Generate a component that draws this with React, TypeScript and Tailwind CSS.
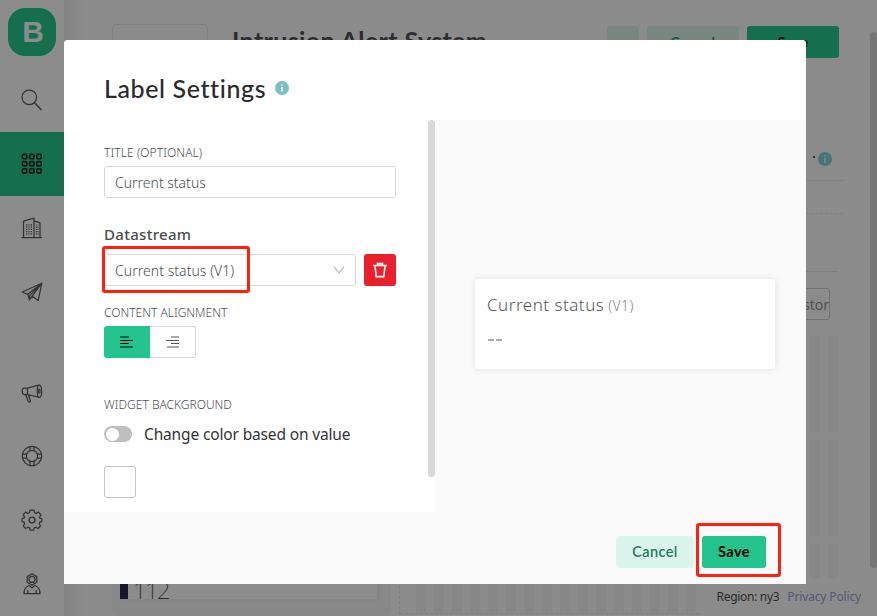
import type { ReactNode } from "react";

const body = "font-['Noto_Sans','Open_Sans',sans-serif]";
const heading = "font-[Lato,'Open_Sans',sans-serif]";

function Icon({ children, size = 22 }: { children: ReactNode; size?: number }) {
  return (
    <svg width={size} height={size} viewBox="0 0 22 22" fill="none" stroke="#333436" strokeWidth="1.25" strokeLinejoin="round" strokeLinecap="round">
      {children}
    </svg>
  );
}

function NavItem({ children, active = false }: { children: ReactNode; active?: boolean }) {
  return (
    <div className={active ? "flex h-16 w-16 items-center justify-center bg-[#156f4f]" : "flex h-16 w-16 items-center justify-center"}>
      {children}
    </div>
  );
}

function Sidebar() {
  const cells = [1.8, 9, 16.2];
  return (
    <nav className="flex h-full w-16 shrink-0 flex-col bg-[#8c8c8c]">
      <div className="flex h-[68px] shrink-0 justify-center pt-2">
        <div className="flex h-12 w-12 items-center justify-center rounded-[17px] bg-[#156f4f] pl-[2px] font-['Liberation_Sans',Arial,sans-serif] text-[30px] font-bold leading-none text-[#8c8c8c]">
          B
        </div>
      </div>
      <NavItem>
        <Icon><circle cx="8.3" cy="8.3" r="7.3" /><path d="M13.6 13.8 20 20.6" strokeWidth="1.5" /></Icon>
      </NavItem>
      <NavItem active>
        <Icon>
          {cells.map((y) => cells.map((x) => <rect key={`${x}-${y}`} x={x - 0.4} y={y - 0.4} width="4.3" height="4.3" rx="1" stroke="#07150f" strokeWidth="1.6" />))}
        </Icon>
      </NavItem>
      <NavItem>
        <Icon>
          <path d="M1 20.5h19.5M2.5 20V4.2L13 1.2V20M13 3.8l6 2V20" />
          <path d="M5 8h6M5 10.2h6M5 12.4h6M5 14.6h6M5 16.8h6" strokeDasharray="1.2 1.2" strokeLinecap="butt" strokeWidth="1.3" />
          <path d="M15 8h2.4M15 10.2h2.4M15 12.4h2.4M15 14.6h2.4M15 16.8h2.4" strokeDasharray="1 .6" strokeLinecap="butt" strokeWidth="1.2" />
        </Icon>
      </NavItem>
      <NavItem>
        <Icon><path d="M1.2 11 20.8 2.2 17.2 19.5 11.2 15.2 8.5 19 6.8 13.3ZM6.8 13.3 20.8 2.2 8.7 14.6 8.5 19M20.8 2.2 11.2 15.2" /></Icon>
      </NavItem>
      <div className="h-9 shrink-0" />
      <NavItem>
        <Icon>
          <path d="M6.5 7.2H3.2Q1.2 7.2 1.2 10.3t2 3.2h3.3ZM6.5 7.2 17.5 4.2M6.5 13.5l11 2.7M4.8 13.8 7 20q.3 1 1.4 1t1-.9L7.6 14" />
          <ellipse cx="18.4" cy="10.2" rx="2.2" ry="6.2" /><ellipse cx="18.2" cy="10.2" rx=".8" ry="2" />
        </Icon>
      </NavItem>
      <NavItem>
        <Icon><circle cx="11" cy="11" r="9.7" /><circle cx="11" cy="11" r="5.7" /><path d="M9 1.5v4.2M13 1.5v4.2M9 16.3v4.2M13 16.3v4.2M1.5 9h4.2M1.5 13h4.2M16.3 9h4.2M16.3 13h4.2" /></Icon>
      </NavItem>
      <NavItem>
        <Icon>
          <path d="m9 1.2h4l.6 2.6 1.6.7 2.3-1.4 2.5 2.7-1.5 2.3.6 1.2 1.8.3v3l-2.1.6-.6 1.6 1.3 2.2-2.4 2.5-2.3-1.3-1.5.7-.6 2.1H9.2l-.6-2.1-1.5-.7-2.4 1.3-2.4-2.5 1.3-2.2L3 13.2l-2-.6v-3l2-.5.5-1.2L2.1 5.7l2.5-2.6 2.2 1.4 1.6-.7Z" />
          <circle cx="11" cy="11" r="2.9" strokeWidth="1.4" />
        </Icon>
      </NavItem>
      <NavItem>
        <Icon><path d="m11 .8 4.8 2.8v5.6L11 12 6.2 9.2V3.6Z" /><circle cx="11" cy="6.4" r="3" /><path d="M8.3 12.5Q3 14 3 20.7h16q0-6.7-5.3-8.2L11 14.7ZM6.8 17.7v3M15.2 17.7v3" /></Icon>
      </NavItem>
    </nav>
  );
}

function Info({ dim = false }: { dim?: boolean }) {
  return (
    <svg width="14" height="14" viewBox="0 0 14 14" className="shrink-0">
      <circle cx="7" cy="7" r="7" fill={dim ? "#477577" : "#7abfc2"} />
      <path d="M6.3 3.2h1.4v1.3H6.3zM6.3 5.7h1.4v5H6.3z" fill={dim ? "#8c8c8c" : "#fff"} />
    </svg>
  );
}

const stripes = "shrink-0 bg-[repeating-linear-gradient(to_right,#878787_0_10px,transparent_10px_18px)]";

function Page() {
  return (
    <main className="flex h-full min-w-0 flex-1 bg-[linear-gradient(to_right,#838383,#8b8b8b_20px)]">
      <div className="flex w-[779px] shrink-0 flex-col pl-12">
        <header className="flex h-[120px] shrink-0 items-start pt-6">
          <div className="h-24 w-24 shrink-0 rounded-[4px] border border-[#818181]" />
          <h1 className={`${heading} ml-6 w-[375px] whitespace-nowrap pt-[1px] text-[25px] font-bold leading-[30px] tracking-[0.37px] text-[#2c2c31]`}>Intrusion Alert System</h1>
          <div className={`${heading} flex gap-2 pt-[2px] text-[14px] font-bold leading-8 tracking-[0.5px]`}>
            <div className="h-8 w-8 rounded-[3px] bg-[#788780]" />
            <div className="h-8 w-[92px] rounded-[3px] bg-[#788780] text-center text-[#1c4e3d]">Cancel</div>
            <div className="h-8 w-[92px] rounded-[3px] bg-[#156f4f] text-center text-black">Save</div>
          </div>
        </header>
        <section className="flex h-[216px] shrink-0 flex-col items-end">
          <div className="flex h-[61px] w-full items-end justify-end border-b border-[#808080] pb-[14px] pr-[11px]">
            <span className="mb-2 mr-[3px] h-[2px] w-[2px] bg-[#333]" />
            <Info dim />
          </div>
          <div className="h-[33px] w-full border-b border-dashed border-[#828282]" />
          <div className="mr-[5px] h-[58px] w-full border-b border-[#808080]" />
          <div className={`${body} mr-[13px] mt-4 flex h-8 w-20 items-center justify-end rounded-[3px] border border-[#717171] text-[14px] text-[#505153]`}>Custor</div>
        </section>
        <section className="flex flex-1">
          <div className="flex w-[279px] flex-col rounded-b-[6px] bg-[#888] px-2">
            <div className="mt-[220px] flex h-[43px] w-[257px] items-end bg-[#8c8c8c] shadow-[2px_0_4px_rgba(0,0,0,0.05)]">
              <span className="h-full w-2 bg-[#15162d]" />
              <span className={`${body} ml-[5px] text-[24px] font-extralight leading-[18px] tracking-[-1.8px] text-[#292a2c]`}>112</span>
            </div>
          </div>
          <div className="ml-2 mb-[2px] flex flex-1 flex-col gap-2 border-l border-dashed border-[#808080] pr-[5px]">
            <div className={`${stripes} ml-[14px] h-24`} />
            <div className={`${stripes} ml-[14px] h-24`} />
            <div className={`${stripes} ml-[14px] h-[34px]`} />
            <div className="-mt-2 h-9 w-[299px] border-b border-dashed border-[#808080] pl-4">
              <div className={`${stripes} h-[34px]`} />
            </div>
          </div>
        </section>
      </div>
      <div className="flex flex-1 justify-end pt-8">
        <div className="h-[536px] w-[7px] rounded-full bg-[#777]" />
      </div>
    </main>
  );
}

const label = `${body} text-[12px] font-light uppercase leading-4 text-[#4b4d51]`;

function Settings() {
  return (
    <div className="flex h-[392px] w-[371px] justify-between bg-white pl-10">
      <div className="flex w-[300px] flex-col pt-[25px]">
        <div className={`${label} tracking-[0.08px]`}>Title (optional)</div>
        <div className={`${body} mt-[5px] flex h-8 w-[292px] items-center rounded-[3px] border border-[#d7d7d7] pl-[10px] text-[14px] font-light text-[#4b4d51]`}>Current status</div>
        <div className={`${body} mt-[26px] text-[15px] font-medium leading-5 tracking-[0.3px] text-[#4b4d51]`}>Datastream</div>
        <div className="mt-[10px] flex gap-2">
          <div className={`${body} relative flex h-8 w-[252px] items-center justify-between rounded-[3px] border border-[#d7d7d7] pl-[10px] pr-[10px] text-[14px] font-light tracking-[0.05px] text-[#4b4d51]`}>
            Current status (V1)
            <svg width="12" height="8" viewBox="0 0 12 8" fill="none" stroke="#b6b6b6" strokeWidth="1.1"><path d="m1 .8 5 6 5-6" /></svg>
            <div className="absolute -left-[3px] -top-[9px] h-[47px] w-[148px] rounded-[3px] border-[3px] border-[#ff2012]" />
          </div>
          <button className="flex h-8 w-8 items-center justify-center rounded-[3px] bg-[#e8202c]">
            <svg width="14" height="16" viewBox="0 0 14 16" fill="none" stroke="white" strokeWidth="1.6"><path d="M0 3.5h14M4.5 2.8V1.6h5v1.2M2 4l1.2 10.6h7.6L12 4" /></svg>
          </button>
        </div>
        <div className={`${label} mt-[19px]`}>Content alignment</div>
        <div className="mt-[5px] flex h-8 w-[92px]">
          <div className="flex w-[46px] items-center justify-center rounded-l-[3px] bg-[#24c48e]">
            <svg width="14" height="12" viewBox="0 0 14 12" shapeRendering="crispEdges"><path d="M0 0h9v2H0zM0 10h13v2H0z" fill="#156148" /><path d="M0 4h13v1H0zM0 7h9v1H0z" fill="#000" /></svg>
          </div>
          <div className="flex w-[46px] items-center justify-center rounded-r-[3px] border border-l-0 border-[#d7d7d7] pl-px">
            <svg width="14" height="12" viewBox="0 0 14 12" shapeRendering="crispEdges"><path d="M5 0h8v2H5zM1 10h12v2H1z" fill="#aaa" /><path d="M0 4h13v1H0zM5 7h8v1H5z" fill="#55575a" /></svg>
          </div>
        </div>
        <div className={`${label} mt-[39px]`}>Widget background</div>
        <div className="mt-[11px] flex h-5 items-center gap-3">
          <div className="h-4 w-7 rounded-full bg-[#bfbfbf] p-[1.5px]"><div className="h-[13px] w-[13px] rounded-full bg-white" /></div>
          <div className={`${body} whitespace-nowrap text-[15.5px] leading-5 tracking-[-0.15px] text-[#323338]`}>Change color based on value</div>
        </div>
        <div className="mt-[22px] h-8 w-8 rounded-[3px] border border-[#c4c4c4]" />
      </div>
      <div className="h-[357px] w-[7px] rounded-full bg-[#d8d8d8]" />
    </div>
  );
}

function Modal() {
  return (
    <div className="absolute left-16 top-10 flex h-[544px] w-[742px] flex-col overflow-hidden rounded-t-[4px] bg-[#fafafa]">
      <header className="flex h-20 shrink-0 items-center gap-[9px] bg-white pl-10 pt-4">
        <h2 className={`${heading} text-[25px] font-medium leading-8 tracking-[0.6px] text-[#292a30]`}>Label Settings</h2>
        <Info />
      </header>
      <div className="flex h-[392px] shrink-0">
        <Settings />
        <div className="flex-1 pl-10 pt-[159px]">
          <div className={`${body} h-[90px] w-[300px] rounded-[4px] bg-white pl-[12px] pt-[14px] shadow-[0_0_8px_rgba(0,0,0,0.1)]`}>
            <div className="flex items-baseline gap-1 whitespace-nowrap leading-6 text-[#55575b]"><span className="text-[17px] font-light tracking-[0.5px]">Current status</span><span className="text-[14px] font-light tracking-[0.4px] text-[#85868a]">(V1)</span></div>
            <div className="mt-[21px] flex gap-[2px] pl-px"><span className="h-[2px] w-[6px] bg-[#aaa]" /><span className="h-[2px] w-[6px] bg-[#aaa]" /></div>
          </div>
        </div>
      </div>
      <footer className={`${heading} flex flex-1 justify-end gap-2 pr-10 pt-6 text-[14.5px] leading-8`}>
        <button className="h-8 w-[78px] rounded-[3px] bg-[#dbf5ec] font-semibold tracking-[0.4px] text-[#1b7a5a]">Cancel</button>
        <div className="relative h-8 w-16">
          <button className="h-8 w-16 rounded-[3px] bg-[#24c48e] font-bold tracking-[0.5px] text-black">Save</button>
          <div className="absolute -left-[6px] -top-[13px] h-[54px] w-[85px] rounded-[3px] border-[3px] border-[#ff2012]" />
        </div>
      </footer>
    </div>
  );
}

export default function App() {
  return (
    <div className="relative flex h-[616px] w-[877px] overflow-hidden bg-[#8b8b8b]">
      <Sidebar />
      <Page />
      <Modal />
      <div className={`${body} absolute bottom-[10px] right-4 flex gap-2 text-[12px] leading-[18px]`}>
        <span className="tracking-[-0.3px] text-[#292a2c]">Region: ny3</span><span className="tracking-[-0.15px] text-[#52597c]">Privacy Policy</span>
      </div>
    </div>
  );
}
